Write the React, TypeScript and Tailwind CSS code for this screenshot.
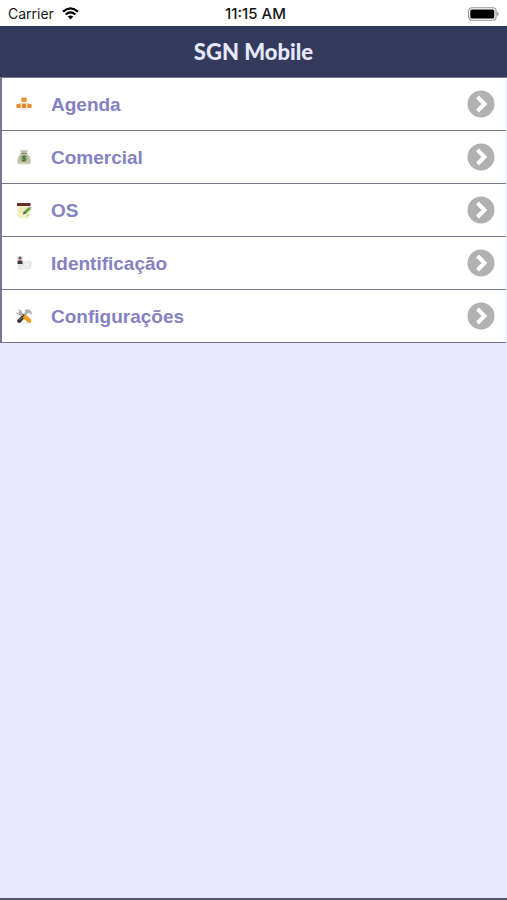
import type { ReactNode } from "react";

function HierarchyIcon() {
  return (
    <svg viewBox="0 0 16 16" className="size-4" aria-hidden="true">
      <ellipse cx="8" cy="12.500" rx="6" ry="1.500" fill="#f6efe8" />
      <path d="M8 5v3M3 9V7.500h10V9" stroke="#f0d2b4" fill="none" />
      <rect x="5.200" y="1.500" width="5.600" height="4.500" rx="1" fill="#e8953c" />
      <rect x="0.300" y="8" width="4.600" height="4" rx="1" fill="#e8903a" />
      <rect x="5.700" y="8" width="4.600" height="4" rx="1" fill="#e08428" />
      <rect x="11.100" y="8" width="4.600" height="4" rx="1" fill="#e8903a" />
    </svg>
  );
}

function MoneyBagIcon() {
  return (
    <svg viewBox="0 0 16 16" className="size-4" aria-hidden="true">
      <ellipse cx="8" cy="14.500" rx="7" ry="1.200" fill="#dcdcd6" />
      <path d="M4 0.800q2 1 4 .2 2 .8 4-.2L10.500 4h-5z" fill="#b9bbaa" />
      <path d="M5.500 4h5c2.500 1.500 4.300 5 4.300 8.500q0 2-2 2H3.200q-2 0-2-2C1.200 9 3 5.500 5.500 4z" fill="#c3c5ad" />
      <path d="M5 4.500h6" stroke="#85906c" />
      <circle cx="8" cy="9.500" r="3.500" fill="#94a777" />
      <path d="M9.800 7.800Q8 6.800 6.800 7.800T8 9.500t1.200 1.700-3 .1M8 6.200v6.600" stroke="#4d6845" fill="none" />
    </svg>
  );
}

function NoteIcon() {
  return (
    <svg viewBox="0 0 16 16" className="size-4" aria-hidden="true">
      <path d="M1.500 2h12.500v10l-3 4H1.500z" fill="#f4f0c4" />
      <path d="M11 16v-4h3z" fill="#d5d4ac" />
      <rect x="1" y="1" width="13.500" height="3" rx="0.500" fill="#64302c" />
      <path d="M3 7h8M3 9.500h6" stroke="#e5dea5" />
      <path d="M7 12.500l1-3L13 5l2 2-5 4.500z" fill="#679b42" />
      <path d="M13 5l2 2 .6-1.200-1.200-1.200z" fill="#c5939d" />
      <path d="M7 12.500l1-3 2 2z" fill="#536343" />
    </svg>
  );
}

function IdCardIcon() {
  return (
    <svg viewBox="0 0 16 16" className="size-4" aria-hidden="true">
      <path d="M2 6.500l12-1 2 2-1 6-12 1.500-1.500-2z" fill="#e5e5e7" />
      <path d="M8 8l5-.5M8 10l5-.5M5 12.500l8-1" stroke="#f8f8f8" />
      <rect x="1" y="1" width="6" height="8" rx="1" fill="#e6e2e2" />
      <circle cx="4" cy="3" r="1.600" fill="#6d5554" />
      <path d="M1.500 6.500q2.500-3 5 0V9h-5z" fill="#353b49" />
      <path d="M3 5h2l-1 2z" fill="#c44541" />
    </svg>
  );
}

function ToolsIcon() {
  return (
    <svg viewBox="0 0 16 16" className="size-4" aria-hidden="true">
      <ellipse cx="8" cy="14.500" rx="6" ry="1" fill="#ededed" />
      <path d="M2 1.500l1.500 2-1.500 2L0 4q.5 3 3.500 3L9 11l2-2-5-4.500Q6 1.500 2 1.500z" fill="#a6acb2" />
      <path d="M8.500 2q4-2 6.500 1l1 3-1.500.5L13 4.500l-1.500 1L3.500 14 1.500 12 9.500 4z" fill="#a9b0b6" />
      <path d="M1 12.500L7.500 6l2.500 2.500L4 15q-3 0-3-2.500z" fill="#39373a" />
      <path d="M6.500 9.500l3-3 5.500 5q1 3.500-2.500 3.500z" fill="#e89b20" />
      <path d="M4 11.500l2-2M4 5l3 3" stroke="#e1a33c" />
    </svg>
  );
}

const items: { label: string; icon: ReactNode }[] = [
  { label: "Agenda", icon: <HierarchyIcon /> },
  { label: "Comercial", icon: <MoneyBagIcon /> },
  { label: "OS", icon: <NoteIcon /> },
  { label: "Identificação", icon: <IdCardIcon /> },
  { label: "Configurações", icon: <ToolsIcon /> },
];

function StatusBar() {
  return (
    <div className="grid h-[26px] grid-cols-3 items-center bg-white px-2 pt-px font-[Inter,sans-serif] text-sm leading-5 text-[#161616]">
      <div className="flex items-center gap-2">
        <span>Carrier</span>
        <svg viewBox="0 0 17 13" className="h-[13px] w-[17px]" aria-label="Wi-Fi">
          <g fill="none" stroke="#000" strokeWidth="2.200">
            <path d="M1 4.600q7.500-6.600 15 0" />
            <path d="M3.700 7.500q4.800-4.200 9.600 0" />
          </g>
          <path d="M5.700 9.600q2.800-2.400 5.600 0L8.500 12.600z" />
        </svg>
      </div>
      <span className="whitespace-nowrap pl-1 text-center text-[15px] font-medium">11:15 AM</span>
      <svg viewBox="0 0 32 14" className="h-3.5 w-8 justify-self-end" aria-label="Battery">
        <rect x="1.600" y="0.750" width="27.500" height="12.500" rx="3.500" fill="#fff" stroke="#999" strokeWidth="1.200" />
        <rect x="3.300" y="2.500" width="24" height="9" rx="1.500" />
        <path d="M30.200 5q3 2 0 4z" fill="#888" />
      </svg>
    </div>
  );
}

export default function App() {
  return (
    <div className="flex min-h-screen flex-col border-b-2 border-[#55556a] bg-[#e7e8ff]">
      <StatusBar />
      <header className="flex h-[52px] items-center justify-center border-b border-[#777694] bg-[#343a5b]">
        <h1 className="font-[Lato,sans-serif] text-[22px] font-black leading-6 text-[#e7e8ff]">SGN Mobile</h1>
      </header>
      <main>
        <ul className="mr-px border-l-2 border-[#77758f] bg-white">
          {items.map((item) => (
            <li key={item.label} className="border-b border-[#777589]">
              <button type="button" className="flex h-[52px] w-full items-center pr-[11px] pl-3.5 text-left">
                {item.icon}
                <span className="ml-[19px] flex-1 pt-px font-['Liberation_Sans',Arial,sans-serif] text-[19px] leading-6 font-bold text-[#8482c1]">
                  {item.label}
                </span>
                <svg viewBox="0 0 28 28" className="size-7" aria-hidden="true">
                  <circle cx="14" cy="14" r="13.500" fill="#b1b1b1" />
                  <path d="M10.500 7l7 7-7 7" fill="none" stroke="#fff" strokeWidth="4" />
                </svg>
              </button>
            </li>
          ))}
        </ul>
      </main>
    </div>
  );
}
